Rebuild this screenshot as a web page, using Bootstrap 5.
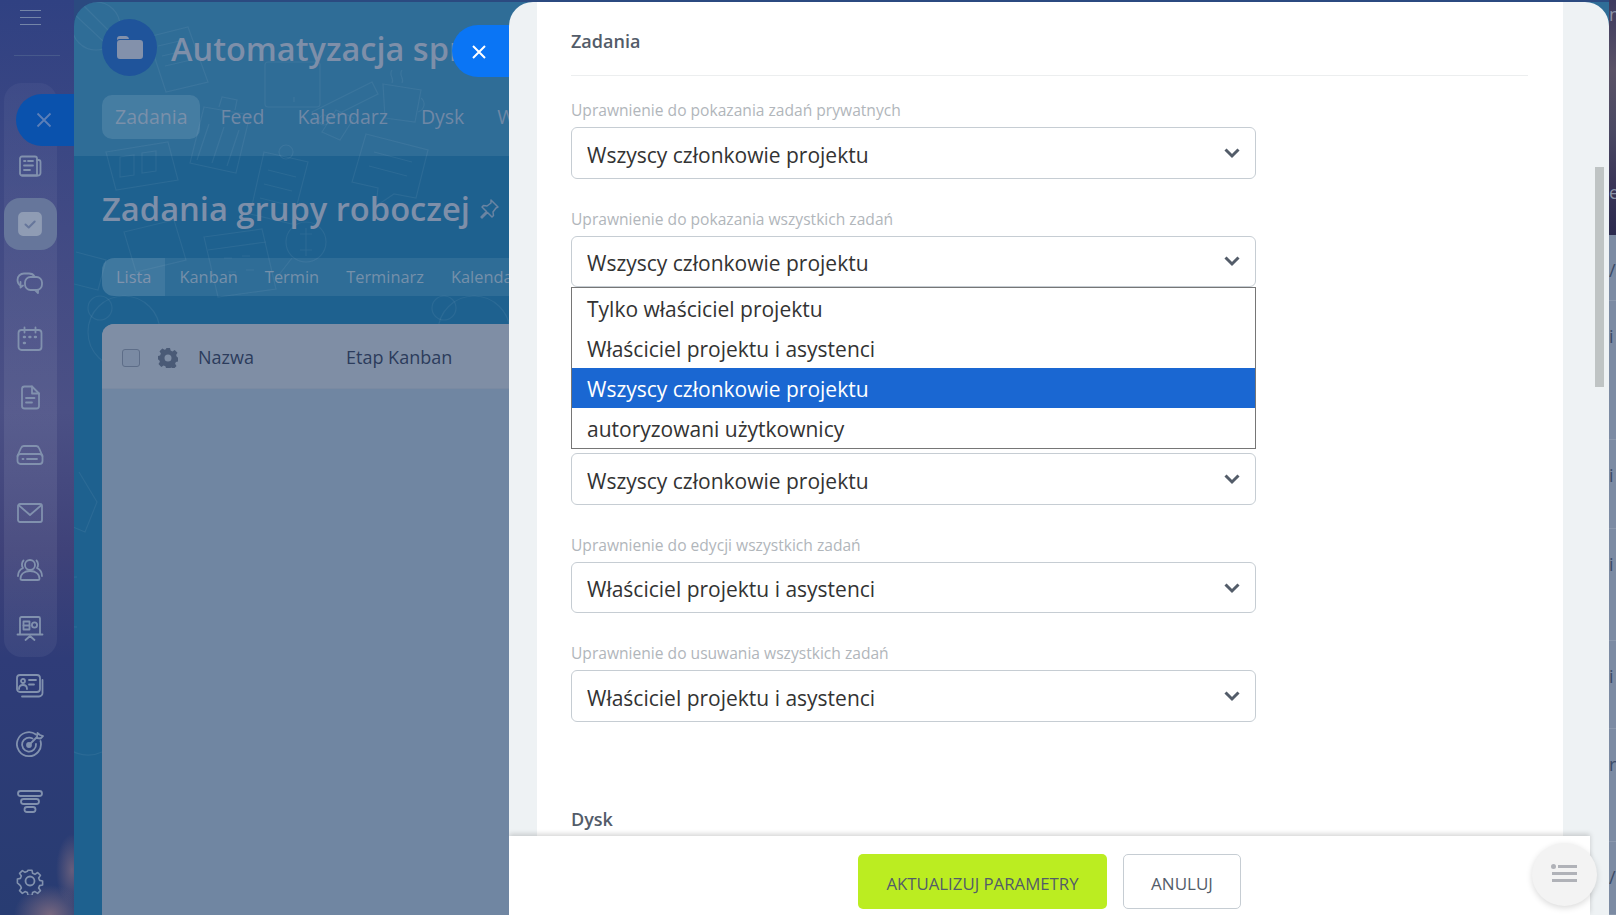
<!DOCTYPE html>
<html lang="pl">
<head>
<meta charset="utf-8">
<title>Zadania</title>
<link href="https://cdn.jsdelivr.net/npm/bootstrap@5.3.0/dist/css/bootstrap.min.css" rel="stylesheet">
<style>
html,body{height:915px;overflow:hidden}
body{font-family:"Open Sans","Noto Sans",sans-serif;background:#2b4a80;position:relative;width:1616px}
.stage{height:915px}
.rail{width:74px;flex:none;position:relative;background:radial-gradient(ellipse 36px 30px at 50px 915px,#77677f 0,#77677f00 100%),radial-gradient(ellipse 16px 36px at 72px 870px,#655d7c 0,#655d7c00 100%),linear-gradient(180deg,#304182 0,#414a84 25%,#4b5085 45%,#3f4279 60%,#2f3c78 72%,#283c72 100%)}
.burger{height:56px;padding-top:10px;margin:0 14px;border-bottom:1px solid #47598c}
.burger i{display:block;width:21px;height:1px;background:#7485a8;margin:0 0 6px 6px}
.railgroup{margin:27px 0 0 4px;width:53px;padding-top:54px;border-radius:18px;background:linear-gradient(180deg,#ffffff0a,#ffffff14 70%,#ffffff0d)}
.railitem{height:57.8px;width:53px;display:flex;align-items:center;justify-content:center;padding-right:1px}
.railitem.on{background:#66769b;border-radius:16px;height:52px;margin:2.9px 0}
.railbare{margin-left:4px}
.railbare.bottom{position:absolute;left:0;bottom:5px}
.railicon{width:28px;height:28px;fill:none;stroke:#8191ae;stroke-width:1.8;stroke-linecap:round;stroke-linejoin:round}
.railclose{position:absolute;left:16px;top:94px;width:58px;height:52px;background:#0a52ad;border-radius:26px 0 0 26px;display:flex;align-items:center;justify-content:center;padding-right:2px}
.workspace{width:1535px;flex:none;margin-top:2px;border-top-left-radius:24px;background:#1e618f;position:relative;overflow:hidden}
.doodles{position:absolute;left:0;top:0;width:1535px;height:913px;fill:none;stroke:#ffffff;stroke-opacity:.06;stroke-width:1.2}
.wshead{height:154px;background:#ffffff14;padding:17px 0 0 28px;position:relative}
.avatar{width:55px;height:57px;border-radius:50%;background:#1f549b;flex:none}
.wstitle{font-size:32.5px;font-weight:600;color:#7e8fa9;white-space:nowrap;margin:1px 0 0 14px;line-height:57px}
.wstabs{margin-top:18px;font-size:19.5px;color:#6f88a6;line-height:44px;height:44px;gap:20px}
.wstabs .pill{background:#ffffff1c;border-radius:10px;padding:0 13px;color:#7a90aa}
.wstabs span{margin-right:13px}
.wstabs .pill{margin-right:0}
.wsbody{position:relative;padding:0 0 0 28px}
.wsh1{font-size:32.7px;font-weight:600;color:#7e8fa9;margin:0;padding-top:30px;padding-bottom:1px;line-height:46px;white-space:nowrap}
.viewbar{margin-top:25px;height:38px;background:#ffffff14;border-radius:12px 0 0 12px;font-size:16.4px;color:#7590aa;line-height:38px}
.viewbar .act{background:#ffffff14;border-radius:12px 0 0 12px;padding:0 14px;color:#7f93ad;margin-right:14px}
.viewbar span{margin-right:27px}
.taskcard{margin-top:28px;height:620px;background:#7086a2;border-radius:12px 0 0 0;overflow:hidden}
.taskhead{height:65px;background:#7f8ea5;border-bottom:1px solid #7a8aa2;color:#2c3c5c;font-size:18px;padding:3px 0 0 20px}
.fakecheck{width:18px;height:18px;border:1px solid #5d6d88;border-radius:3px;background:#7a8aa3;flex:none}
.taskgear{margin:0 20px 0 18px}
.colname{width:148px}
.sidestrip{width:7px;flex:none;overflow:hidden;background:#7c8ba3;color:#3a4a66;font-size:18px}
.stripimg{height:235px;background:linear-gradient(180deg,#3d3a5f 0,#5a5266 30%,#4b4963 55%,#3a3557 78%,#2b2a4e 100%);color:#8b93a8;line-height:22px}
.stripimg div{height:178px;padding-top:3px}
.striprow{border-bottom:1px solid #8b98ad;padding-top:24px;line-height:22px}
.striprow.h66{height:66px}
.striprow.h139{height:139px}
.striprow.h89{height:89px}
.striprow.h112{height:112px}
.striprow.h88{height:88px}
.striprow.h113{height:113px}
.striprow.h73{height:73px}
.slider{position:absolute;left:509px;top:2px;width:1100px;height:913px;background:#eef2f4;border-radius:24px 24px 0 0;display:flex;flex-direction:column;overflow:hidden}
.closetab{position:absolute;left:452px;top:25px;width:60px;height:52px;background:#0a75f5;border-radius:26px 0 0 26px;display:flex;align-items:center;justify-content:flex-start;padding:1px 0 0 20px}
.slidescroll{flex:1 1 auto;min-height:0;overflow:hidden;padding-left:28px;padding-right:46px}
.whitepanel{background:#fff;height:100%;padding:0 35px 0 34px}
.sectitle{font-size:18px;font-weight:600;color:#535c69;height:74px;padding-top:26px;line-height:26px;border-bottom:1px solid #eceeef}
.fieldrow{margin-bottom:30px;position:relative}
.firstfield{margin-top:23px;margin-bottom:29px}
.fieldrow label{display:block;font-size:15.6px;line-height:22px;color:#b1b6bb;margin-bottom:6px}
.pick.form-select{width:685px;height:51.6px;font-family:inherit;font-size:21px;color:#333;border:1px solid #c6cdd3;border-radius:6px;padding:5px 40px 0 15px;box-shadow:none;background-position:right 15px center;background-size:16px 12px;background-image:url("data:image/svg+xml,%3csvg xmlns='http://www.w3.org/2000/svg' viewBox='0 0 16 12'%3e%3cpath fill='none' stroke='%23535c69' stroke-width='3' d='M1.500 2.500 8 9l6.500-6.500'/%3e%3c/svg%3e")}
.openlist{position:absolute;left:0;top:79px;width:685px;z-index:5;border:1px solid #767676;background:#fff;font-size:21px;color:#333}
.openlist div{height:40px;line-height:42px;padding-left:15px}
.openlist div.sel{background:#1a67d2;color:#fff}
.gapfield{margin-bottom:166px}
.tightfield{margin-bottom:29px}
.tightfield2{margin-bottom:29px}
.dysk{font-size:18px;font-weight:600;color:#535c69;line-height:24px;margin-top:85px}
.slidefoot{height:79px;flex:none;width:1081px;background:#fff;box-shadow:0 -2px 5px #0000002b;padding-top:18px;gap:16px;position:relative}
.savebtn.btn{width:249px;height:55px;background:#bbed21;border:0;border-radius:5px;color:#535c69;font-size:16.8px;font-weight:500;padding:4px 0 0;line-height:38px}
.cancelbtn.btn{width:118px;height:55px;background:#fff;border:1px solid #c6cdd3;border-radius:5px;color:#535c69;font-size:17px;font-weight:500;padding:4px 0 0;line-height:36px}
.scrollthumb{position:absolute;left:1086px;top:165px;width:9px;height:220px;background:#bfc4c4}
.floatbtn{position:absolute;left:1532px;top:843px;width:65px;height:63px;border-radius:50%;background:#f3f3f3;box-shadow:0 2px 6px #00000026;display:flex;align-items:center;justify-content:center;padding:0 2px 3px 0}
</style>
</head>
<body>
<div class="stage d-flex">
  <nav class="rail">
    <div class="burger"><i></i><i></i><i></i></div>
    <div class="railgroup">
      <div class="railitem"><svg class="railicon" viewBox="0 0 28 28"><path d="M4 6.500a2 2 0 0 1 2-2h13a2 2 0 0 1 2 2v17H6a2 2 0 0 1-2-2z"/><path d="M21 8h1.500a2 2 0 0 1 2 2v11a2.500 2.500 0 0 1-2.500 2.500H6"/><path d="M8 9h1.500M12 9h5M8 13.500h9M8 18h6"/></svg></div>
      <div class="railitem on"><svg class="railicon" viewBox="0 0 28 28"><rect x="3" y="3" width="22" height="22" rx="4" fill="#8f9cb4" stroke="#8f9cb4"/><path d="m9.500 14.500 3.200 3 6-6" stroke="#66769b" stroke-width="2"/></svg></div>
      <div class="railitem"><svg class="railicon" viewBox="0 0 28 28"><path d="M4.500 18.500c-2-1-3-3-3-5.500 0-4 3-6.500 6.500-6.500h5c2.500 0 4.500 1 5.500 3"/><path d="M4.500 15v5.500l2.500-2"/><rect x="9" y="10" width="17" height="13" rx="5.500"/><path d="M22 23v3l-3-3"/></svg></div>
      <div class="railitem"><svg class="railicon" viewBox="0 0 28 28"><rect x="2.500" y="5" width="23" height="20" rx="3"/><path d="M8.500 2.500v5M19.500 2.500v5"/><path d="M8 12h.8M13.500 12h.8M19 12h.8M8 18h.8" stroke-width="2.600"/></svg></div>
      <div class="railitem"><svg class="railicon" viewBox="0 0 28 28"><path d="M6 6a2.500 2.500 0 0 1 2.500-2.500H16l7 7V23a2.500 2.500 0 0 1-2.500 2.500h-12A2.500 2.500 0 0 1 6 23z"/><path d="M16 3.500v7h7"/><path d="M10 15h8.500M10 19.500h6"/></svg></div>
      <div class="railitem"><svg class="railicon" viewBox="0 0 28 28"><path d="M1.500 15 5 7a3 3 0 0 1 2.700-2h12.600A3 3 0 0 1 23 7l3.500 8"/><rect x="1.500" y="13" width="25" height="10" rx="3"/><path d="M6.500 18h1M11 18h10"/></svg></div>
      <div class="railitem"><svg class="railicon" viewBox="0 0 28 28"><rect x="2" y="5" width="24" height="18" rx="2"/><path d="m3 6.500 11 9.500 11-9.500"/></svg></div>
      <div class="railitem"><svg class="railicon" viewBox="0 0 28 28"><circle cx="14" cy="9" r="5"/><path d="M4.500 23c0-5 4-8 9.500-8s9.500 3 9.500 8c0 .8-.6 1-1.500 1H6c-.9 0-1.500-.2-1.500-1z"/><path d="M7.500 4.500c-2 2-2 5.500-.5 7.500-3 1.500-5 5-5 8M20.500 4.500c2 2 2 5.500.5 7.500 3 1.500 5 5 5 8"/></svg></div>
      <div class="railitem"><svg class="railicon" viewBox="0 0 28 28"><path d="M1.500 20.500h25M4 20.500V4.500A1.500 1.500 0 0 1 5.500 3h17A1.500 1.500 0 0 1 24 4.500v16"/><rect x="7.500" y="7.500" width="6" height="8"/><path d="M7.500 11.500h6"/><circle cx="18.500" cy="11" r="2.600"/><path d="m9.500 26 4.500-4 4.500 4"/></svg></div>
    </div>
    <div class="railbare railitem"><svg class="railicon" viewBox="0 0 28 28"><rect x="1" y="3" width="23" height="17" rx="3"/><circle cx="7" cy="9" r="2"/><path d="M3 17c0-3 2-4 4-4s4 1 4 4M13 8h7M13 12.500h5"/><path d="M26.500 8v13a3.500 3.500 0 0 1-3.500 3.500H6"/></svg></div>
    <div class="railbare railitem"><svg class="railicon" viewBox="0 0 28 28"><path d="M20 4.500A12 12 0 1 0 24.500 11"/><path d="M16.500 8.500A7 7 0 1 0 20 14"/><circle cx="13" cy="15" r="2" fill="#8191ae"/><path d="m13 15 8-8M21 7l.5-4 2.500 2 3 1-2.500 2.500-3.500-.5z"/></svg></div>
    <div class="railbare railitem"><svg class="railicon" viewBox="0 0 28 28"><rect x="2" y="3" width="24" height="5" rx="2.500"/><rect x="5" y="11" width="18" height="5" rx="2.500"/><rect x="8.500" y="19" width="11" height="5" rx="2.500"/></svg></div>
    <div class="railbare railitem bottom"><svg class="railicon" viewBox="0 0 28 28"><circle cx="14" cy="14" r="4.500"/><path d="M11.800 2h4.400l.7 3.500 2.600 1.100 3-2 3.100 3.100-2 3 1.100 2.600 3.300.7v4.400l-3.300.7-1.100 2.600 2 3-3.100 3.100-3-2-2.600 1.100-.7 3.300h-4.400l-.7-3.300-2.600-1.100-3 2-3.100-3.100 2-3-1.100-2.600L0 16.200v-4.400l3.300-.7 1.100-2.600-2-3 3.100-3.100 3 2 2.600-1.100z" transform="translate(1.400 1.400) scale(.9)"/></svg></div>
    <div class="railclose"><svg width="16" height="16" viewBox="0 0 16 16" fill="none" stroke="#5c7fb8" stroke-width="1.800"><path d="m1.500 1.500 13 13m0-13-13 13"/></svg></div>
  </nav>
  <main class="workspace">
    <svg class="doodles" viewBox="0 0 1535 913">
      <circle cx="22" cy="24" r="24"/><path d="M0 12 30 40l8-8L10 4"/>
      <path d="m74 35 40-10 20 55-42 10z"/><path d="M84 44l26-6M88 54l26-6M91 64l26-6"/>
      <path d="m130 105 46 8-14 58-46-10z"/><path d="m135 122-12 36M150 125l-12 36M165 128l-12 36"/><path d="m145 105 3-10 15 3-2 10"/>
      <rect x="191" y="60" width="55" height="45" rx="3"/><path d="M220 95v5"/>
      <path d="m238 110 60-30 6 12-60 30zM248 130l14-22 18 8-14 22z"/><circle cx="250" cy="118" r="5"/>
      <path d="M309 82l38 6-6 32-30-4z"/><path d="M347 96a8 8 0 0 1-3 14"/><path d="M318 68c-4 6 3 8 0 13M328 68c-4 6 3 8 0 13"/>
      <path d="m292 132 62 16-12 48-22-4-18 12 2-18-26-6z"/><path d="M300 150l38 10M295 164l38 10"/>
      <path d="m190 150 44 10-16 62-42-10z"/><path d="M194 168l28 7M190 182l28 7M186 196l28 7"/><circle cx="212" cy="150" r="7"/>
      <path d="m32 150 62-10 10 38-62 10z"/><path d="M46 175v-20l14-2v20zM68 171v-20l14-2v20z"/>
      <path d="M130 235l58-8 14 60-58 8z"/><path d="M134 248l58-8"/><path d="M150 256h8M168 254h8M154 270h8M172 268h8"/>
      <circle cx="232" cy="240" r="20"/><path d="m218 256-14 18"/><path d="M226 232h12M226 248h12M232 226v28"/>
      <circle cx="26" cy="306" r="12"/><circle cx="370" cy="306" r="12"/><circle cx="50" cy="330" r="36"/><circle cx="400" cy="330" r="36"/>
      <path d="m50 230 50-12 12 40-50 12z"/><path d="m2 250 30 8-8 30-24-6"/>
      <path d="m5 470 18 30-12 30-12-5"/><path d="M3 575a14 14 0 0 0 0 50"/><path d="M0 690a30 30 0 0 0 28 60"/>
    </svg>
    <div class="wshead">
      <div class="d-flex align-items-start">
        <div class="avatar d-flex align-items-center justify-content-center"><svg width="26" height="23" viewBox="0 0 26 23"><path d="M0 3a3 3 0 0 1 3-3h6a3 3 0 0 1 2.500 1.500L12 3H3.500C2 3 0 3 0 5zM0 7a3 3 0 0 1 3-3h20a3 3 0 0 1 3 3v13a3 3 0 0 1-3 3H3a3 3 0 0 1-3-3z" fill="#8391ab"/></svg></div>
        <h2 class="wstitle">Automatyzacja sprzedaży</h2>
      </div>
      <div class="wstabs d-flex"><span class="pill">Zadania</span><span>Feed</span><span>Kalendarz</span><span>Dysk</span><span>Więcej</span></div>
    </div>
    <div class="wsbody">
      <h1 class="wsh1 d-flex align-items-center gap-2">Zadania grupy roboczej <svg width="22" height="22" viewBox="0 0 22 22" fill="none" stroke="#6a84a2" stroke-width="1.500" stroke-linejoin="round"><path d="m13 2 7 7-2 1-3 4 .5 3.500L14 19l-4.500-4.500L4 20l-1-1 5.500-5.500L4 9l1.500-1.500L9 8l4-3z"/></svg></h1>
      <div class="viewbar d-flex"><span class="act">Lista</span><span>Kanban</span><span>Termin</span><span>Terminarz</span><span>Kalendarz</span></div>
      <div class="taskcard">
        <div class="taskhead d-flex align-items-center">
          <div class="fakecheck"></div>
          <svg class="taskgear" width="20" height="20" viewBox="0 0 20 20"><path fill="#4a5a76" fill-rule="evenodd" d="M8 0h4l.6 2.600 1.800.8L16.700 2l2.800 2.800-1.400 2.300.8 1.900L20 9.600v3.800l-2.100.600-.8 1.800 1.400 2.300-2.800 2.800-2.300-1.400-1.800.8L12 20H8l-.6-1.700-1.800-.8-2.300 1.400L.5 16.100l1.400-2.300-.8-1.800L0 11.400V8l2.100-.6.800-1.900L1.500 3.200 4.300.4l2.300 1.400 1.800-.8zM10 6.500a3.500 3.500 0 1 0 0 7 3.500 3.500 0 0 0 0-7z"/></svg>
          <div class="colname">Nazwa</div>
          <div>Etap Kanban</div>
        </div>
      </div>
    </div>
  </main>
  <aside class="sidestrip">
    <div class="stripimg"><div>n</div><div>e</div></div>
    <div class="striprow h66">/a</div>
    <div class="striprow h139">i</div>
    <div class="striprow h89">i</div>
    <div class="striprow h112">i</div>
    <div class="striprow h88">i</div>
    <div class="striprow h113">rt</div>
    <div class="striprow h73">/a</div>
  </aside>
</div>

<div class="closetab"><svg width="14" height="14" viewBox="0 0 14 14" fill="none" stroke="#fff" stroke-width="2"><path d="m1 1 12 12M13 1 1 13"/></svg></div>

<section class="slider">
  <div class="slidescroll">
    <div class="whitepanel">
      <div class="sectitle">Zadania</div>
      <div class="fieldrow firstfield">
        <label for="f1">Uprawnienie do pokazania zadań prywatnych</label>
        <select id="f1" class="form-select pick"><option>Wszyscy członkowie projektu</option></select>
      </div>
      <div class="fieldrow gapfield">
        <label for="f2">Uprawnienie do pokazania wszystkich zadań</label>
        <select id="f2" class="form-select pick"><option>Wszyscy członkowie projektu</option></select>
        <div class="openlist">
          <div>Tylko właściciel projektu</div>
          <div>Właściciel projektu i asystenci</div>
          <div class="sel">Wszyscy członkowie projektu</div>
          <div>autoryzowani użytkownicy</div>
        </div>
      </div>
      <div class="fieldrow tightfield">
        <select class="form-select pick" aria-label="Uprawnienie"><option>Wszyscy członkowie projektu</option></select>
      </div>
      <div class="fieldrow tightfield2">
        <label for="f4">Uprawnienie do edycji wszystkich zadań</label>
        <select id="f4" class="form-select pick"><option>Właściciel projektu i asystenci</option></select>
      </div>
      <div class="fieldrow">
        <label for="f5">Uprawnienie do usuwania wszystkich zadań</label>
        <select id="f5" class="form-select pick"><option>Właściciel projektu i asystenci</option></select>
      </div>
      <div class="dysk">Dysk</div>
    </div>
  </div>
  <footer class="slidefoot d-flex justify-content-center">
    <button type="button" class="btn savebtn">AKTUALIZUJ PARAMETRY</button>
    <button type="button" class="btn cancelbtn">ANULUJ</button>
  </footer>
  <div class="scrollthumb"></div>
</section>

<div class="floatbtn"><svg width="26" height="18" viewBox="0 0 26 18" fill="#b0b2b8"><circle cx="2.500" cy="2.500" r="2.500"/><rect x="7" y="1" width="19" height="3"/><rect x="1" y="8" width="25" height="3"/><rect x="1" y="15" width="25" height="3"/></svg></div>
<script src="https://cdn.jsdelivr.net/npm/bootstrap@5.3.0/dist/js/bootstrap.bundle.min.js"></script>
</body>
</html>
